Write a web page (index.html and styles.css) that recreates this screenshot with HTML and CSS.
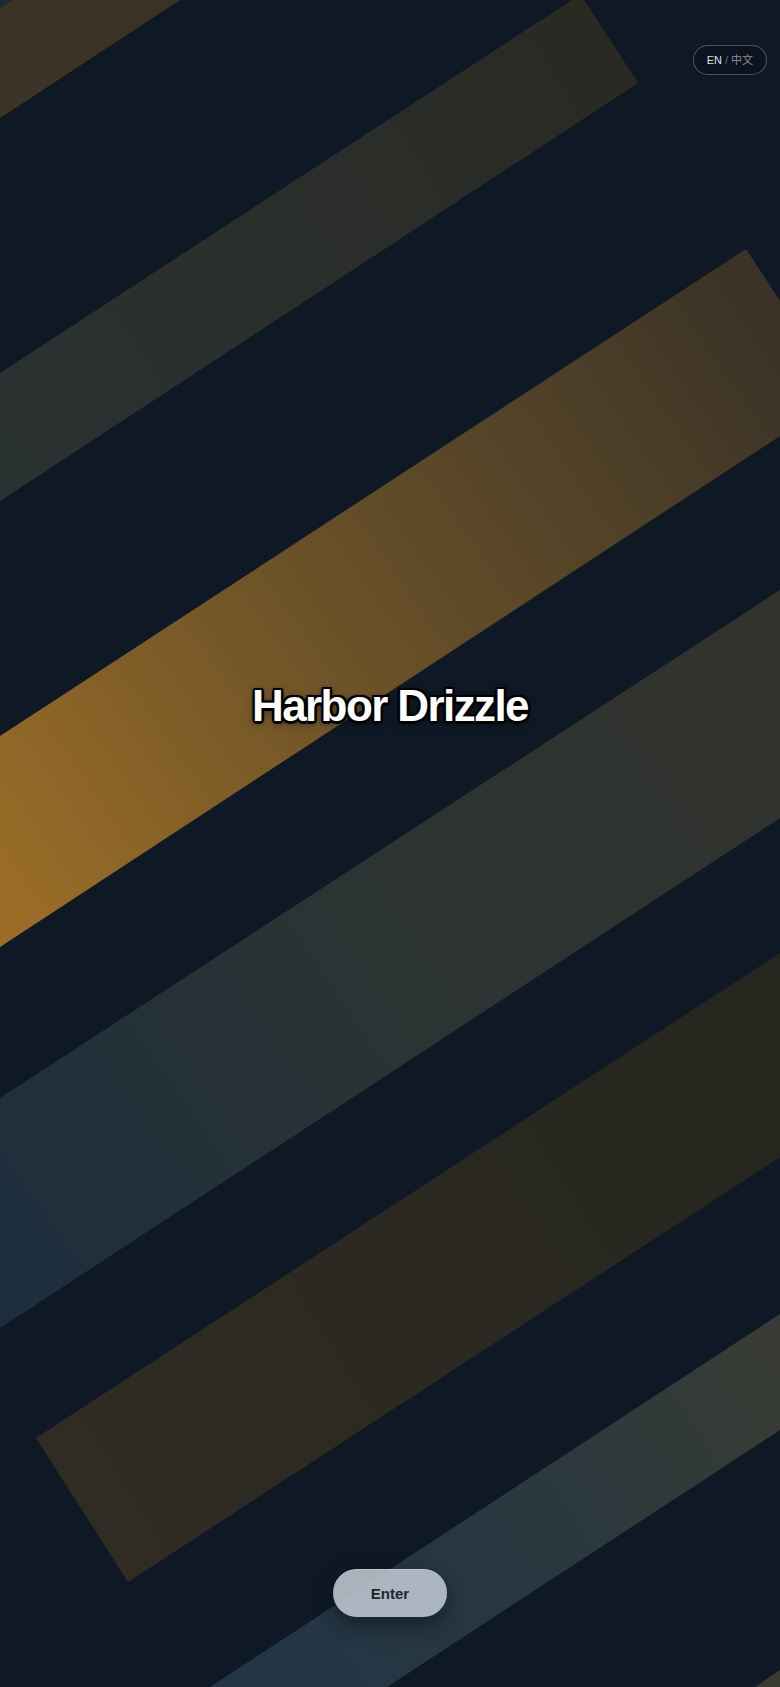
FILE: index.html
```html
<!DOCTYPE html>
<html lang="en">
<head>
<meta charset="utf-8">
<title>Harbor Drizzle</title>
<link rel="stylesheet" href="styles.css">
</head>
<body>
<div class="page">
  <svg class="backdrop" viewBox="0 0 780 1687" preserveAspectRatio="none" aria-hidden="true">
    <defs>
      <linearGradient id="g1" gradientUnits="userSpaceOnUse" x1="0" y1="100" x2="180" y2="0">
        <stop offset="0" stop-color="#3d3427"/>
        <stop offset="1" stop-color="#3a3226"/>
      </linearGradient>
      <linearGradient id="g2" gradientUnits="userSpaceOnUse" x1="0" y1="440" x2="620" y2="40">
        <stop offset="0" stop-color="#2b3232"/>
        <stop offset="1" stop-color="#2a2a23"/>
      </linearGradient>
      <linearGradient id="g3" gradientUnits="userSpaceOnUse" x1="0" y1="880" x2="780" y2="340">
        <stop offset="0" stop-color="#9a6d27"/>
        <stop offset="0.45" stop-color="#6a5128"/>
        <stop offset="1" stop-color="#3b3327"/>
      </linearGradient>
      <linearGradient id="g4" gradientUnits="userSpaceOnUse" x1="0" y1="1230" x2="780" y2="700">
        <stop offset="0" stop-color="#1d2e3d"/>
        <stop offset="0.45" stop-color="#2b3434"/>
        <stop offset="1" stop-color="#32332d"/>
      </linearGradient>
      <linearGradient id="g5" gradientUnits="userSpaceOnUse" x1="60" y1="1500" x2="780" y2="1050">
        <stop offset="0" stop-color="#302c23"/>
        <stop offset="1" stop-color="#26261f"/>
      </linearGradient>
      <linearGradient id="g6" gradientUnits="userSpaceOnUse" x1="280" y1="1687" x2="780" y2="1370">
        <stop offset="0" stop-color="#233646"/>
        <stop offset="0.5" stop-color="#29383f"/>
        <stop offset="1" stop-color="#383c34"/>
      </linearGradient>
    </defs>
    <polygon points="0,0 13,0 0,8" fill="#1b2a39"/>
    <polygon points="13,0 180,0 0,118 0,8" fill="url(#g1)"/>
    <polygon points="0,373 572,0 584,0 638,83 0,501" fill="url(#g2)"/>
    <polygon points="0,736 746,249 780,301 780,436 0,947" fill="url(#g3)"/>
    <polygon points="0,1098 780,590 780,818 0,1328" fill="url(#g4)"/>
    <polygon points="36,1438 780,953 780,1157 128,1582" fill="url(#g5)"/>
    <polygon points="210,1687 780,1314 780,1430 387,1687" fill="url(#g6)"/>
    <polygon points="755,1687 780,1670 780,1687" fill="#3a3a2f"/>
  </svg>

  <header class="topbar">
    <button class="lang-toggle" type="button">
      <span class="lang-active">EN</span>
      <span class="lang-sep">/</span>
      <span class="lang-other">中文</span>
    </button>
  </header>

  <main class="hero">
    <h1 class="title">Harbor Drizzle</h1>
  </main>

  <footer class="actions">
    <button class="enter-btn" type="button">Enter</button>
  </footer>
</div>
</body>
</html>
```

FILE: styles.css
```css
* {
  box-sizing: border-box;
}

html, body {
  margin: 0;
  padding: 0;
  height: 100%;
}

body {
  background: #0f1926;
  font-family: "Liberation Sans", Arial, "Noto Sans CJK SC", sans-serif;
  color: #ffffff;
  overflow: hidden;
}

.page {
  position: relative;
  width: 100%;
  height: 100vh;
  min-height: 1687px;
  display: flex;
  flex-direction: column;
  overflow: hidden;
  background: #0f1926;
}

.backdrop {
  position: absolute;
  top: 0;
  left: 0;
  width: 100%;
  height: 100%;
  z-index: 0;
}

.topbar,
.hero,
.actions {
  position: relative;
  z-index: 1;
}

.topbar {
  display: flex;
  justify-content: flex-end;
  padding: 45px 13px 0 0;
}

.lang-toggle {
  display: flex;
  align-items: center;
  gap: 3px;
  height: 30px;
  padding: 0 13px 0 13px;
  border: 1px solid rgba(255, 255, 255, 0.28);
  border-radius: 999px;
  background: rgba(8, 14, 22, 0.45);
  font-family: "Liberation Sans", Arial, "Noto Sans CJK SC", sans-serif;
  font-size: 11px;
  line-height: 1;
  cursor: pointer;
}

.lang-active {
  color: #dfe3e8;
}

.lang-sep {
  color: #6c7480;
}

.lang-other {
  color: #8d939b;
}

.hero {
  display: flex;
  justify-content: center;
  padding-top: 606px;
}

.title {
  margin: 0;
  font-family: "Liberation Sans", Arial, sans-serif;
  font-weight: 700;
  font-size: 44px;
  line-height: 50px;
  letter-spacing: -1.6px;
  color: #ffffff;
  text-shadow:
    2.5px 0 0 #000,
    -2.5px 0 0 #000,
    0 2.5px 0 #000,
    0 -2.5px 0 #000,
    1.8px 1.8px 0 #000,
    -1.8px 1.8px 0 #000,
    1.8px -1.8px 0 #000,
    -1.8px -1.8px 0 #000,
    0 0 4px rgba(0, 0, 0, 0.8),
    0 3px 8px rgba(0, 0, 0, 0.5);
}

.actions {
  margin-top: auto;
  display: flex;
  justify-content: center;
  padding-bottom: 70px;
}

.enter-btn {
  width: 114px;
  height: 48px;
  border: none;
  border-radius: 999px;
  background: rgba(190, 200, 210, 0.88);
  color: #1d2631;
  font-family: "Liberation Sans", Arial, sans-serif;
  font-weight: 700;
  font-size: 15px;
  box-shadow: 0 8px 22px rgba(0, 0, 0, 0.45), inset 0 1px 0 rgba(255, 255, 255, 0.25);
  cursor: pointer;
}
```
